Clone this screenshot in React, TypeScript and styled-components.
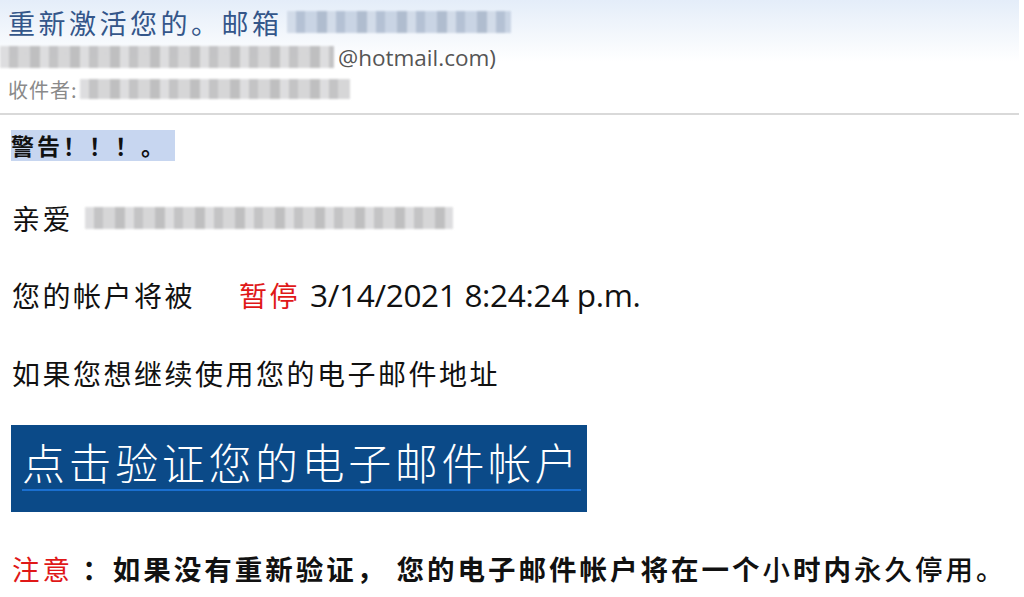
import React from 'react';
import styled, { createGlobalStyle } from 'styled-components';

const GlobalStyle = createGlobalStyle`
  html, body {
    margin: 0;
    padding: 0;
    background: #fff;
  }
  body {
    width: 1024px;
    height: 597px;
    overflow: hidden;
    font-family: "Noto Sans CJK SC", "Noto Sans", sans-serif;
  }
`;

const Page = styled.div`
  width: 1024px;
  height: 597px;
  display: flex;
  flex-direction: column;
  background: #fff;
`;

const Header = styled.header`
  width: 1019px;
  height: 115px;
  box-sizing: border-box;
  padding: 4px 0 0 8px;
  background: linear-gradient(180deg, #e4edf9 0%, #f3f7fc 30%, #ffffff 55%);
  border-bottom: 2px solid #d9d9d9;
  display: flex;
  flex-direction: column;
`;

const Subject = styled.div`
  display: flex;
  align-items: center;
  height: 36px;
  font-size: 27px;
  color: #34568a;
  letter-spacing: 3.5px;
  white-space: nowrap;
`;

const FromLine = styled.div`
  display: flex;
  align-items: center;
  height: 34px;
  margin-left: -8px;
  font-family: "Open Sans", "Noto Sans", sans-serif;
  font-size: 22.5px;
  color: #555;
  white-space: nowrap;
`;

const ToLine = styled.div`
  display: flex;
  align-items: center;
  height: 30px;
  font-size: 20px;
  letter-spacing: 1px;
  color: #8a8a8a;
  white-space: nowrap;
`;

// pixelated redaction block
const Redacted = styled.span<{ $w: number; $h: number; $gap?: number; $tone?: 'blue' | 'gray' }>`
  display: inline-block;
  width: ${p => p.$w}px;
  height: ${p => p.$h}px;
  margin-left: ${p => p.$gap ?? 4}px;
  margin-right: 4px;
  background:
    repeating-linear-gradient(90deg,
      rgba(255,255,255,0.35) 0 9px,
      rgba(0,0,0,0.05) 9px 18px,
      rgba(255,255,255,0.2) 18px 30px,
      rgba(0,0,0,0.08) 30px 40px),
    ${p => (p.$tone === 'blue' ? '#b4c3d9' : '#c4c4c6')};
  filter: blur(1.2px);
  opacity: 0.85;
`;

const Body = styled.main`
  display: flex;
  flex-direction: column;
  padding: 15px 0 0 12px;
  color: #111;
`;

const Warning = styled.div`
  align-self: flex-start;
  background: #c7d6f0;
  font-size: 23px;
  font-weight: 700;
  line-height: 31px;
  padding: 0 8px 0 0;
  margin-left: -1px;
  letter-spacing: 3px;
`;

const Line = styled.div<{ $top: number }>`
  display: flex;
  align-items: center;
  margin-top: ${p => p.$top}px;
  font-size: 28px;
  letter-spacing: 2.5px;
  line-height: 40px;
  white-space: nowrap;
`;

const Red = styled.span<{ $gap?: number }>`
  color: #e01818;
  margin-left: ${p => p.$gap ?? 0}px;
`;

const DateText = styled.span`
  font-family: "Open Sans", "Noto Sans", sans-serif;
  font-size: 31.5px;
  margin-left: 10px;
  letter-spacing: -0.3px;
`;

const VerifyButton = styled.a`
  align-self: flex-start;
  margin-top: 32px;
  margin-left: -1px;
  width: 576px;
  height: 87px;
  box-sizing: border-box;
  padding: 8px 0 0 11px;
  background: #0b4a88;
  color: #fff;
  font-size: 43px;
  font-weight: 300;
  line-height: 56px;
  letter-spacing: 3.6px;
  text-decoration: none;
  white-space: nowrap;

  span {
    display: inline-block;
    border-bottom: 2px solid #1a6fd0;
    line-height: 56px;
  }
`;

const Notice = styled.div`
  display: flex;
  align-items: center;
  margin-top: 34px;
  font-size: 27.5px;
  letter-spacing: 3px;
  line-height: 44px;
  white-space: nowrap;

  b {
    font-weight: 700;
    color: #111;
  }
`;

const Light = styled.span`
  font-weight: 500;
`;

export default function App() {
  return (
    <Page>
      <GlobalStyle />
      <Header>
        <Subject>
          重新激活您的。邮箱
          <Redacted $w={224} $h={22} $tone="blue" />
        </Subject>
        <FromLine>
          <Redacted $w={334} $h={22} $gap={0} />
          @hotmail.com)
        </FromLine>
        <ToLine>
          收件者:
          <Redacted $w={270} $h={20} $gap={2} />
        </ToLine>
      </Header>
      <Body>
        <Warning>警告！！！。</Warning>
        <Line $top={37}>
          亲爱
          <Redacted $w={368} $h={22} $gap={12} />
        </Line>
        <Line $top={37}>
          您的帐户将被
          <Red $gap={44}>暂停</Red>
          <DateText>3/14/2021 8:24:24 p.m.</DateText>
        </Line>
        <Line $top={38}>如果您想继续使用您的电子邮件地址</Line>
        <VerifyButton href="#">
          <span>点击验证您的电子邮件帐户</span>
        </VerifyButton>
        <Notice>
          <Red>注意</Red>
          <b>&nbsp;：如果没有重新验证，</b>
          <b>&nbsp;您的电子邮件帐户将在一个</b>
          <Light>小</Light>
          <b>时内</b>
          <Light>永久停用。</Light>
        </Notice>
      </Body>
    </Page>
  );
}
